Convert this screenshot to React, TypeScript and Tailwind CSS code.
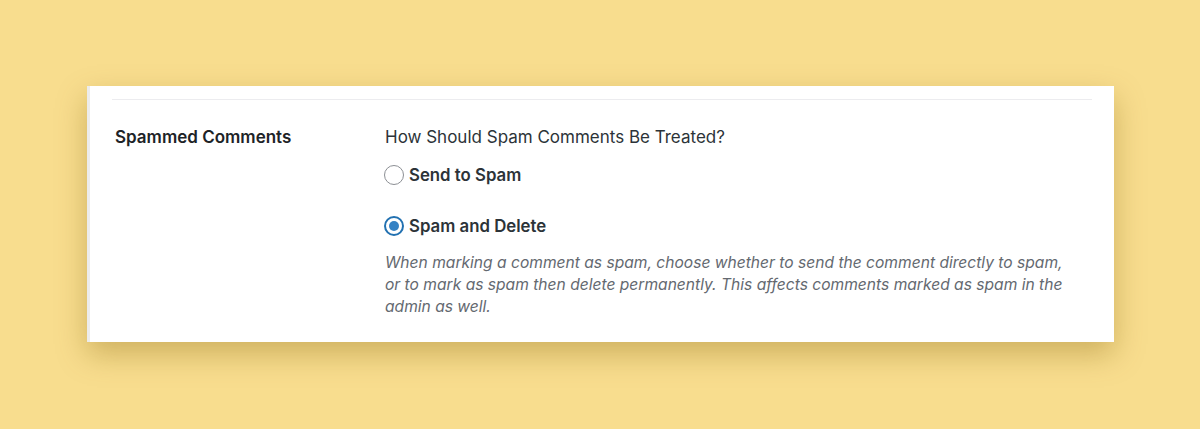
export default function App() {
  return (
    <div className="min-h-[429px] w-[1200px] bg-[#f8dd8e] pt-[86px] pl-[87px] font-['Inter',sans-serif]">
      <div className="w-[1027px] h-[256px] bg-white border-l-[3px] border-[#ececec] shadow-[0_12px_28px_rgba(130,95,10,0.35)] px-[22px] pt-[13px]">
        <div className="w-[980px] border-t border-[#ececef]" />
        <div className="flex pt-[25px]">
          <div className="w-[273px] pl-[3px] text-[17px] font-semibold text-[#1d2327] leading-[24px]">
            Spammed Comments
          </div>
          <div className="flex flex-col">
            <div className="text-[17px] text-[#2c3338] leading-[24px]">How Should Spam Comments Be Treated?</div>
            <label className="flex items-center gap-[5px] mt-[14px] -ml-[1px]">
              <span className="w-[20px] h-[20px] rounded-full border border-[#8c8f94] bg-white" />
              <span className="text-[16.8px] font-semibold text-[#2c3338] leading-[24px]">Send to Spam</span>
            </label>
            <label className="flex items-center gap-[5px] mt-[27px] -ml-[1px]">
              <span className="w-[20px] h-[20px] rounded-full border-2 border-[#2271b1] bg-white flex items-center justify-center">
                <span className="w-[10px] h-[10px] rounded-full bg-[#3582c4]" />
              </span>
              <span className="text-[16.8px] font-semibold text-[#2c3338] leading-[24px]">Spam and Delete</span>
            </label>
            <p className="mt-[14px] w-[690px] text-[15.6px] italic leading-[22px] text-[#646970]">
              When marking a comment as spam, choose whether to send the comment directly to spam, or to mark as spam then delete permanently. This affects comments marked as spam in the admin as well.
            </p>
          </div>
        </div>
      </div>
    </div>
  )
}
